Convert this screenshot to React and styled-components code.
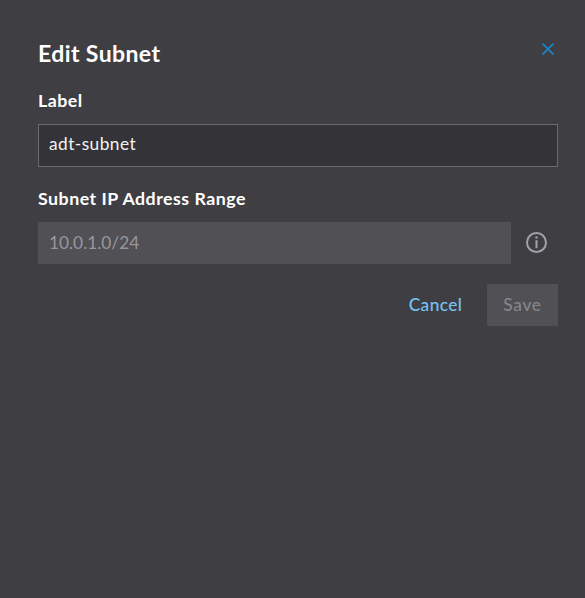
import React from "react";
import styled, { createGlobalStyle } from "styled-components";

const GlobalStyle = createGlobalStyle`
  * { box-sizing: border-box; }
  body { margin: 0; background: #3f3e43; }
`;

const Drawer = styled.main`
  height: 598px;
  padding: 38px 27px 0 38px;
  background: #3f3e43;
  color: #fff;
  font-family: Lato, sans-serif;
  font-size: 17.3px;
`;

const Header = styled.header`
  display: flex;
  justify-content: space-between;
  align-items: flex-start;
  height: 50px;
`;

const Title = styled.h1`
  margin: 0;
  font-size: 23px;
  line-height: 30px;
  font-weight: 700;
  letter-spacing: 0.4px;
`;

const CloseButton = styled.button`
  display: flex;
  margin: 5px 4px 0 0;
  padding: 0;
  border: 0;
  background: none;
  color: #1687cb;
`;

const Field = styled.section`
  display: flex;
  flex-direction: column;
  height: 98px;
`;

const FieldLabel = styled.label`
  height: 36px;
  font-size: 17.8px;
  line-height: 24px;
  font-weight: 700;
  letter-spacing: 0.48px;
`;

const InputRow = styled.div`
  display: flex;
  align-items: center;
`;

const Input = styled.input`
  flex: 1;
  min-width: 0;
  height: ${(p) => (p.disabled ? "42px" : "43px")};
  padding: 0 10px ${(p) => (p.disabled ? "2px" : "4px")};
  border: 1px solid ${(p) => (p.disabled ? "#515055" : "#6c6b70")};
  border-radius: 0;
  outline: 0;
  background: ${(p) => (p.disabled ? "#515055" : "#343338")};
  color: ${(p) => (p.disabled ? "#98979c" : "#f2f2f3")};
  font: inherit;
  letter-spacing: ${(p) => (p.disabled ? "0" : "0.45px")};
`;

const InfoButton = styled.button`
  display: flex;
  margin: 0 10px 1px 14px;
  padding: 0;
  border: 0;
  background: none;
  color: #a3a2a8;
`;

const Actions = styled.footer`
  display: flex;
  justify-content: flex-end;
`;

const Button = styled.button`
  width: ${(p) => (p.$filled ? "71px" : "103px")};
  height: 42px;
  padding: 0 0 2px;
  border: 0;
  border-radius: 1px;
  background: ${(p) => (p.$filled ? "#515055" : "transparent")};
  color: ${(p) => (p.$filled ? "#87868b" : "#74c4f5")};
  font: inherit;
  font-weight: 500;
  letter-spacing: ${(p) => (p.$filled ? "0.7px" : "0.4px")};
`;

const CloseIcon = () => (
  <svg width="12" height="12" viewBox="0 0 12 12" fill="none" stroke="currentColor" strokeWidth="1.7">
    <path d="M0.5 0.5 11.5 11.5M11.5 0.5 0.5 11.5" />
  </svg>
);

const InfoIcon = () => (
  <svg width="23" height="23" viewBox="0 0 23 23" fill="none" stroke="currentColor">
    <circle cx="11.5" cy="11.5" r="9.5" strokeWidth="2" />
    <path d="M11.5 9.2v8" strokeWidth="2" />
    <circle cx="11.5" cy="6.4" r="1.2" fill="currentColor" stroke="none" />
  </svg>
);

export default function App() {
  return (
    <>
      <GlobalStyle />
      <Drawer>
        <Header>
          <Title>Edit Subnet</Title>
          <CloseButton aria-label="Close"><CloseIcon /></CloseButton>
        </Header>
        <Field>
          <FieldLabel htmlFor="label">Label</FieldLabel>
          <InputRow>
            <Input id="label" defaultValue="adt-subnet" />
          </InputRow>
        </Field>
        <Field>
          <FieldLabel htmlFor="range">Subnet IP Address Range</FieldLabel>
          <InputRow>
            <Input id="range" defaultValue="10.0.1.0/24" disabled />
            <InfoButton aria-label="Address range help"><InfoIcon /></InfoButton>
          </InputRow>
        </Field>
        <Actions>
          <Button>Cancel</Button>
          <Button $filled disabled>Save</Button>
        </Actions>
      </Drawer>
    </>
  );
}
